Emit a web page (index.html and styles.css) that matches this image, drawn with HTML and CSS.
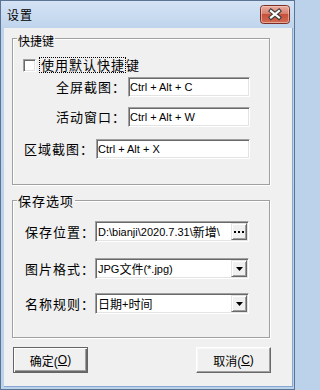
FILE: index.html
```
<!DOCTYPE html>
<html lang="zh-CN">
<head>
<meta charset="utf-8">
<title>设置</title>
<link rel="stylesheet" href="styles.css">
</head>
<body>
<div class="window">
  <div class="titlebar">
    <span class="title">设置</span>
    <div class="close-btn">
      <svg width="30" height="19" viewBox="0 0 30 19">
        <defs>
          <linearGradient id="cg" x1="0" y1="0" x2="0" y2="1">
            <stop offset="0" stop-color="#eab0a3"/>
            <stop offset="0.45" stop-color="#d8806f"/>
            <stop offset="0.5" stop-color="#c5513c"/>
            <stop offset="1" stop-color="#d46c55"/>
          </linearGradient>
        </defs>
        <rect x="0.5" y="0.5" width="29" height="18" rx="3" fill="url(#cg)" stroke="#7a2e24"/>
        <rect x="1.5" y="1.5" width="27" height="16" rx="2" fill="none" stroke="#f6d2c8" stroke-opacity="0.6"/>
        <path d="M11 6 L19 12.5 M19 6 L11 12.5" stroke="#3a3a3a" stroke-width="4.2" stroke-linecap="square" fill="none"/>
        <path d="M11 6 L19 12.5 M19 6 L11 12.5" stroke="#ffffff" stroke-width="2.2" stroke-linecap="square" fill="none"/>
      </svg>
    </div>
  </div>
  <div class="client">
    <div class="group group-hotkeys">
      <span class="group-title title-hotkeys">快捷键</span>
      <label class="check-row">
        <span class="checkbox"></span>
        <span class="check-text"><span class="focus-rect">使用默认快捷</span>键</span>
      </label>
      <div class="field row-1">
        <span class="field-label">全屏截图：</span>
        <div class="edit edit-short">Ctrl + Alt + C</div>
      </div>
      <div class="field row-2">
        <span class="field-label">活动窗口：</span>
        <div class="edit edit-short">Ctrl + Alt + W</div>
      </div>
      <div class="field row-3">
        <span class="field-label">区域截图：</span>
        <div class="edit edit-long">Ctrl + Alt + X</div>
      </div>
    </div>

    <div class="group group-save">
      <span class="group-title title-save">保存选项</span>
      <div class="field save-row row-a">
        <span class="field-label">保存位置：</span>
        <div class="combo">
          <span class="combo-text">D:\bianji\2020.7.31\<span class="cjk">新增</span>\</span>
          <span class="side-btn">
            <svg width="10" height="2" viewBox="0 0 10 2"><rect x="0" y="0" width="2" height="2" fill="#000"/><rect x="4" y="0" width="2" height="2" fill="#000"/><rect x="8" y="0" width="2" height="2" fill="#000"/></svg>
          </span>
        </div>
      </div>
      <div class="field save-row row-b">
        <span class="field-label">图片格式：</span>
        <div class="combo">
          <span class="combo-text">JPG<span class="cjk">文件</span>(*.jpg)</span>
          <span class="side-btn">
            <svg width="7" height="4" viewBox="0 0 7 4"><polygon points="0,0 7,0 3.5,4" fill="#000"/></svg>
          </span>
        </div>
      </div>
      <div class="field save-row row-c">
        <span class="field-label">名称规则：</span>
        <div class="combo">
          <span class="combo-text"><span class="cjk">日期</span>+<span class="cjk">时间</span></span>
          <span class="side-btn">
            <svg width="7" height="4" viewBox="0 0 7 4"><polygon points="0,0 7,0 3.5,4" fill="#000"/></svg>
          </span>
        </div>
      </div>
    </div>

    <div class="buttons">
      <button class="btn btn-default" type="button">确定(<u>O</u>)</button>
      <button class="btn btn-normal" type="button">取消(<u>C</u>)</button>
    </div>
  </div>
</div>
</body>
</html>
```
FILE: styles.css
```
* { box-sizing: border-box; }
html, body { margin: 0; padding: 0; }
body {
  width: 295px;
  height: 390px;
  overflow: hidden;
  font-family: "Noto Sans CJK SC", "Noto Sans", sans-serif;
  color: #000;
  background: #bcd2ea;
}

.window {
  width: 295px;
  height: 390px;
  border: 1px solid #5b7494;
  background: linear-gradient(#d4e3f5 0, #bfd4ec 27px, #bcd2ea 100%);
  display: flex;
  flex-direction: column;
}

.titlebar {
  height: 27px;
  flex: none;
  display: flex;
  align-items: flex-start;
  padding: 0 4px 0 6px;
}
.title {
  font-size: 12px;
  letter-spacing: 1px;
  line-height: 14px;
  margin-top: 7px;
}
.close-btn {
  margin-left: auto;
  margin-top: 4px;
  width: 30px;
  height: 19px;
}
.close-btn svg { display: block; }

.client {
  flex: 1;
  margin: 0 1px 2px 3px;
  background: #f0f0f0;
  border-right: 1px solid #84a8d2;
  border-bottom: 1px solid #84a8d2;
  padding: 10px 0 0 8px;
  display: flex;
  flex-direction: column;
  align-items: flex-start;
}

.group {
  position: relative;
  width: 258px;
  border: 1px solid #a0a0a0;
  box-shadow: inset 1px 1px 0 #fff, 1px 1px 0 #fff;
  display: flex;
  flex-direction: column;
  align-items: flex-start;
}
.group-hotkeys { height: 147px; }
.group-save { height: 138px; margin-top: 15px; }

.group-title {
  position: absolute;
  left: 4px;
  padding: 0 1px;
  background: #f0f0f0;
  line-height: 14px;
  white-space: nowrap;
}
.title-hotkeys { top: -5px; font-size: 12px; }
.title-save { top: -7px; font-size: 13px; letter-spacing: 1px; }

.check-row {
  display: flex;
  align-items: flex-start;
  height: 16px;
  margin: 18px 0 0 10px;
  font-size: 13px;
  letter-spacing: 1px;
  line-height: 14px;
}
.checkbox {
  width: 13px;
  height: 13px;
  margin: 2px 3px 0 0;
  background: #fff;
  border: 1px solid;
  border-color: #a0a0a0 #fff #fff #a0a0a0;
  box-shadow: inset 1px 1px 0 #696969, inset -1px -1px 0 #e3e3e3;
}
.check-text {
  display: flex;
  align-items: center;
  height: 16px;
  white-space: nowrap;
}
.focus-rect {
  display: block;
  height: 16px;
  border: 1px dotted #000;
  padding-left: 1px;
}

.field {
  display: flex;
  align-items: center;
}
.field-label {
  width: 70px;
  flex: none;
  font-size: 13px;
  letter-spacing: 1px;
  line-height: 14px;
  white-space: nowrap;
}
.row-1 { margin: 4px 0 0 43px; }
.row-2 { margin: 10px 0 0 43px; }
.row-3 { margin: 12px 0 0 11px; }

.edit, .combo {
  background: #fff;
  border: 1px solid;
  border-color: #a0a0a0 #fff #fff #a0a0a0;
  box-shadow: inset 1px 1px 0 #696969, inset -1px -1px 0 #e3e3e3;
  font-family: "Liberation Sans", "Noto Sans CJK SC", sans-serif;
  font-size: 11px;
  white-space: nowrap;
  overflow: hidden;
}
.edit {
  height: 20px;
  margin-left: 2px;
  padding-left: 1px;
  display: flex;
  align-items: center;
}
.edit-short { width: 122px; }
.edit-long { width: 154px; }

.save-row { margin-left: 12px; }
.row-a { margin-top: 20px; }
.row-b { margin-top: 16px; }
.row-c { margin-top: 14px; }

.combo {
  width: 154px;
  height: 21px;
  padding: 1px;
  display: flex;
  align-items: stretch;
}
.combo-text {
  flex: 1;
  min-width: 0;
  display: flex;
  align-items: center;
  padding-left: 1px;
  overflow: hidden;
}
.cjk { font-size: 12px; }
.side-btn {
  width: 16px;
  flex: none;
  background: #f0f0f0;
  border: 1px solid;
  border-color: #e3e3e3 #696969 #696969 #e3e3e3;
  box-shadow: inset 1px 1px 0 #fff, inset -1px -1px 0 #a0a0a0;
  display: flex;
  align-items: center;
  justify-content: center;
}
.side-btn svg { display: block; }

.buttons {
  width: 259px;
  margin-top: 9px;
  display: flex;
  justify-content: space-between;
}
.btn {
  width: 75px;
  height: 26px;
  padding: 0;
  margin: 0;
  background: #f0f0f0;
  font-family: "Liberation Sans", "Noto Sans CJK SC", sans-serif;
  font-size: 12px;
  color: #000;
  display: flex;
  align-items: center;
  justify-content: center;
  border: 1px solid;
}
.btn-default {
  margin-left: 1px;
  border-color: #646464;
  box-shadow: inset 1px 1px 0 #fff, inset -1px -1px 0 #696969, inset -2px -2px 0 #a0a0a0;
}
.btn-normal {
  border-color: #fff #696969 #696969 #fff;
  box-shadow: inset -1px -1px 0 #a0a0a0, inset 1px 1px 0 #f8f8f8;
}
.btn u { text-decoration: underline; }
```
